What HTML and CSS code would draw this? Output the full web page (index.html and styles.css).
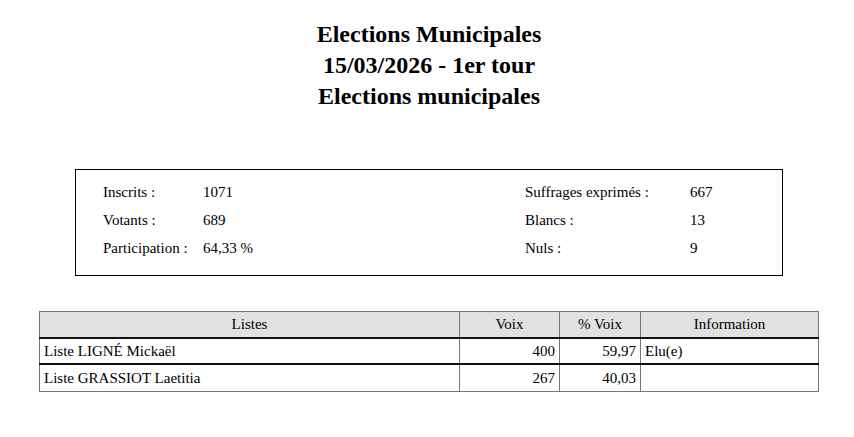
FILE: index.html
```html
<!DOCTYPE html>
<html lang="fr">
<head>
<meta charset="utf-8">
<title>Elections Municipales</title>
<link rel="stylesheet" href="styles.css">
</head>
<body>
<div class="page">
  <h1 class="title">Elections Municipales<br>15/03/2026 - 1er tour<br>Elections municipales</h1>
  <div class="summary">
    <div class="stats left">
      <div class="row"><span class="label">Inscrits :</span><span>1071</span></div>
      <div class="row"><span class="label">Votants :</span><span>689</span></div>
      <div class="row"><span class="label">Participation :</span><span>64,33 %</span></div>
    </div>
    <div class="stats right">
      <div class="row"><span class="label">Suffrages exprimés :</span><span>667</span></div>
      <div class="row"><span class="label">Blancs :</span><span>13</span></div>
      <div class="row"><span class="label">Nuls :</span><span>9</span></div>
    </div>
  </div>
  <table class="results">
    <thead>
      <tr><th class="c-list">Listes</th><th class="c-voix">Voix</th><th class="c-pct">% Voix</th><th class="c-info">Information</th></tr>
    </thead>
    <tbody>
      <tr><td>Liste LIGNÉ Mickaël</td><td class="num">400</td><td class="num">59,97</td><td>Elu(e)</td></tr>
      <tr class="last"><td>Liste GRASSIOT Laetitia</td><td class="num">267</td><td class="num">40,03</td><td></td></tr>
    </tbody>
  </table>
</div>
</body>
</html>
```
FILE: styles.css
```css
html, body {
  margin: 0;
  padding: 0;
  background: #fff;
}
body {
  font-family: "Liberation Serif", "Times New Roman", serif;
  color: #000;
  font-size: 15px;
}
.page {
  width: 854px;
  padding-top: 19px;
}
.title {
  margin: 0;
  text-align: center;
  font-size: 24px;
  line-height: 31px;
  font-weight: bold;
  color: #000;
  padding-left: 4px;
}
.summary {
  margin: 57px 0 0 75px;
  width: 706px;
  height: 105px;
  border: 1px solid #000;
  display: flex;
  box-sizing: content-box;
}
.stats {
  padding-top: 8px;
  display: flex;
  flex-direction: column;
}
.stats.left {
  padding-left: 27px;
  width: 422px;
}
.row {
  display: flex;
  height: 28px;
  align-items: center;
}
.stats .label {
  width: 100px;
}
.stats.right .label {
  width: 165px;
}
.results {
  margin: 35px 0 0 39px;
  border-collapse: collapse;
  width: 780px;
  border: 1px solid #222;
}
.results th, .results td {
  border: 1px solid #777;
  padding: 0 4px;
}
.results th {
  height: 25px;
  background: #e1e1e1;
  font-weight: normal;
  text-align: center;
  border-bottom-color: #999;
}
.results td {
  height: 24px;
  text-align: left;
}
.results tr.last td {
  height: 26px;
}
.results tbody tr {
  border-top: 2px solid #111;
}
.results td.num {
  text-align: right;
}
.c-list { width: 411px; }
.c-voix { width: 91px; }
.c-pct { width: 72px; }
.c-info { width: auto; }
```
